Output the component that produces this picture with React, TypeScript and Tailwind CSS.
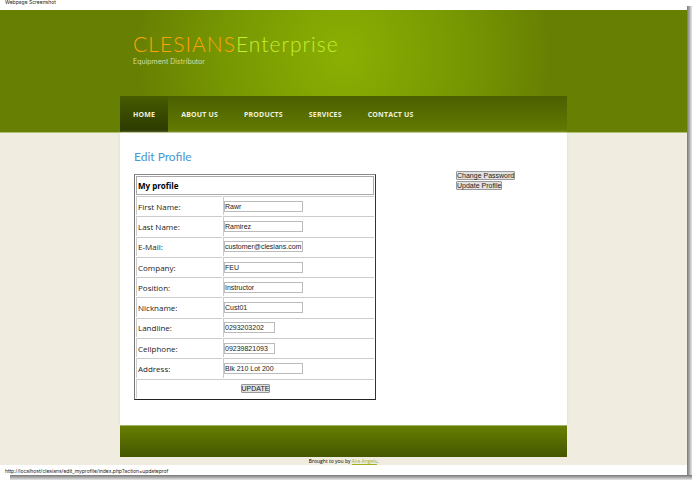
import React from "react";

type Field = { id: string; label: string; value: string; short?: boolean };

const fields: Field[] = [
  { id: "first", label: "First Name:", value: "Rawr" },
  { id: "last", label: "Last Name:", value: "Ramirez" },
  { id: "email", label: "E-Mail:", value: "customer@clesians.com" },
  { id: "company", label: "Company:", value: "FEU" },
  { id: "position", label: "Position:", value: "Instructor" },
  { id: "nickname", label: "Nickname:", value: "Cust01" },
  { id: "landline", label: "Landline:", value: "0293203202", short: true },
  { id: "cellphone", label: "Cellphone:", value: "09239821093", short: true },
  { id: "address", label: "Address:", value: "Blk 210 Lot 200" },
];

const links = ["ABOUT US", "PRODUCTS", "SERVICES", "CONTACT US"];

const column = "mx-auto w-full max-w-[447px]";
const button =
  "block h-[9px] rounded-[1px] border border-[#999] bg-[#e2e2e2] font-['Liberation_Sans',sans-serif] text-[7px] leading-[7px] text-[#222]";

function Header() {
  return (
    <header className="border-b border-[#adbd72] bg-[#677f02] bg-[radial-gradient(circle_at_50%_45px,#8bb002_0px,#779702_120px,#677f02_210px)]">
      <div className={column}>
        <div className="h-[86px] px-[13px] pt-[20px]">
          <h1 className="font-['Lato',sans-serif] text-[21px] leading-[27px] font-light tracking-wider text-[#c3ee2f]">
            <span className="text-[#ffa500]">CLESIANS</span>Enterprise
          </h1>
          <p className="font-['Inter',sans-serif] text-[7px] leading-[9px] text-[#d3dfa6]">Equipment Distributor</p>
        </div>
        <nav className="flex h-[36px] bg-linear-to-b from-[#4b5f00] to-[#637b02] text-[7px] font-bold tracking-wide text-[#eef2df]">
          <a href="#home" className="flex items-center bg-linear-to-b from-[#475c00] to-[#2b3900] px-[13px] pt-[2px]">
            HOME
          </a>
          {links.map((l) => (
            <a key={l} href="#page" className="flex items-center px-[13px] pt-[2px]">
              {l}
            </a>
          ))}
        </nav>
      </div>
    </header>
  );
}

function ProfileTable() {
  return (
    <table className="h-[226px] w-[242px] border-separate border-spacing-[1px] border border-t-[#888] border-r-[#333] border-b-[#222] border-l-[#777] text-[8px] leading-[11px] text-[#222]">
      <thead>
        <tr className="h-[19px]">
          <th colSpan={2} className="border border-[#aaa] px-px text-left font-bold text-black">
            My profile
          </th>
        </tr>
      </thead>
      <tbody>
        {fields.map((f) => (
          <tr key={f.id} className="h-[19px]">
            <td className="w-[86px] border-t border-l border-[#ccc] px-px">
              <label htmlFor={f.id}>{f.label}</label>
            </td>
            <td className="border-t border-l border-[#ccc]">
              <input
                id={f.id}
                defaultValue={f.value}
                className={`${f.short ? "w-[51px]" : "w-[79px]"} block h-[11px] border border-[#bbb] bg-white font-['Liberation_Sans',sans-serif] text-[7px] leading-[9px] text-[#222]`}
              />
            </td>
          </tr>
        ))}
        <tr className="h-[19px]">
          <td colSpan={2} className="border-t border-l border-[#ccc]">
            <button type="submit" className={`${button} mx-auto`}>
              UPDATE
            </button>
          </td>
        </tr>
      </tbody>
    </table>
  );
}

export default function App() {
  return (
    <div className="flex min-h-screen flex-col bg-white font-['Open_Sans','Noto_Sans',sans-serif]">
      <div className="flex flex-1">
        <div className="flex flex-1 flex-col">
          <div className="h-[10px] pl-[5px] font-['Inter',sans-serif] text-[5px] leading-[5px] text-[#222]">
            Webpage Screenshot
          </div>
          <Header />
          <div className="flex flex-1 flex-col bg-[#f0ede0]">
            <main className={`${column} flex-1 bg-white shadow-[0_0_3px_#dddac8]`}>
              <div className="flex px-[14px] pt-[16px]">
                <form className="w-[322px]" onSubmit={(e) => e.preventDefault()}>
                  <h2 className="mb-[9px] font-['Lato',sans-serif] text-[12px] leading-[16px] text-[#4798d3]">
                    Edit Profile
                  </h2>
                  <ProfileTable />
                </form>
                <div className="flex flex-col items-start gap-px pt-[22px]">
                  <button type="button" className={button}>Change Password</button>
                  <button type="button" className={button}>Update Profile</button>
                </div>
              </div>
            </main>
            <footer>
              <div className={`${column} h-[32px] border-t border-[#a3b562] bg-linear-to-b from-[#677f02] to-[#445700]`} />
              <p className="text-center text-[5px] leading-[8px] text-black">
                Brought to you by{" "}
                <a href="#credits" className="text-[#a3ad1c] underline">
                  Ace Angels
                </a>
                .
              </p>
            </footer>
          </div>
          <div className="h-[10px] pt-[3px] pl-[5px] font-['Inter',sans-serif] text-[5px] leading-[7px] text-[#222]">
            http://localhost/clesians/edit_myprofile/index.php?action=updateprof
          </div>
        </div>
        <div className="mt-[6px] w-[5px] bg-linear-to-r from-[#777] to-[#e8e8e8]" />
      </div>
      <div className="ml-[10px] h-[5px] bg-linear-to-b from-[#777] to-[#e8e8e8]" />
    </div>
  );
}
